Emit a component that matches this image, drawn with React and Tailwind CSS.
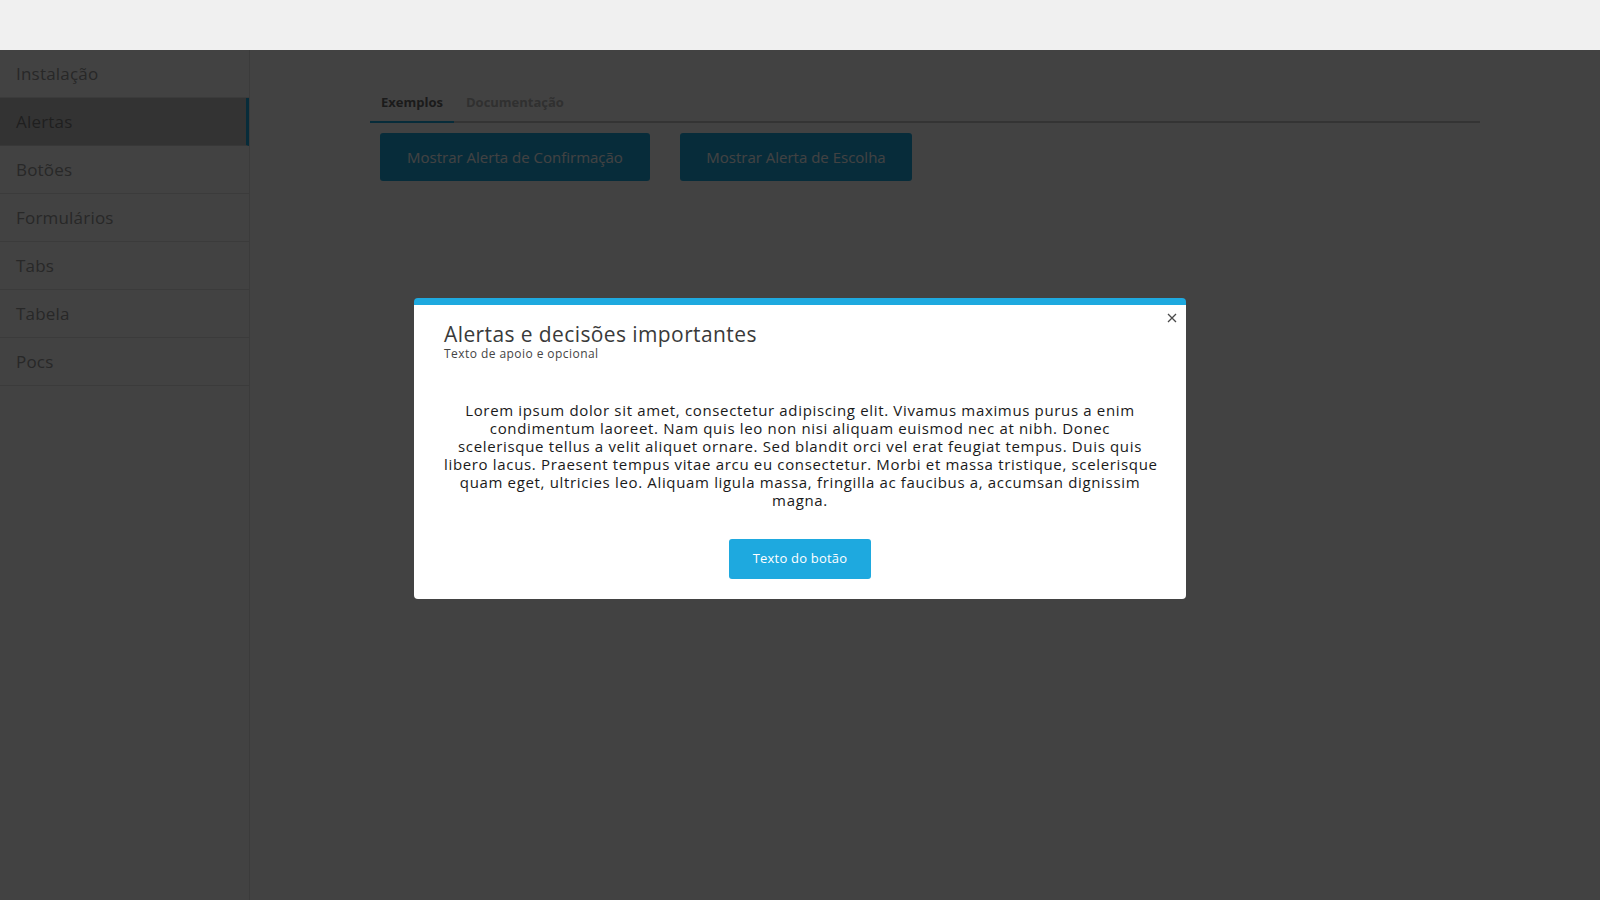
import React from "react";

const font = { fontFamily: '"Open Sans", "DejaVu Sans", sans-serif' };

const items = ["Instalação", "Alertas", "Botões", "Formulários", "Tabs", "Tabela", "Pocs"];

const lines = [
  "Lorem ipsum dolor sit amet, consectetur adipiscing elit. Vivamus maximus purus a enim",
  "condimentum laoreet. Nam quis leo non nisi aliquam euismod nec at nibh. Donec",
  "scelerisque tellus a velit aliquet ornare. Sed blandit orci vel erat feugiat tempus. Duis quis",
  "libero lacus. Praesent tempus vitae arcu eu consectetur. Morbi et massa tristique, scelerisque",
  "quam eget, ultricies leo. Aliquam ligula massa, fringilla ac faucibus a, accumsan dignissim",
  "magna.",
];

export default function App() {
  return (
    <div className="w-[1600px] h-[900px] overflow-hidden bg-white relative" style={font}>
      <header className="h-[50px] bg-[#f0f0f0] relative z-20" />
      <div className="flex h-[850px]">
        <aside className="w-[250px] shrink-0 border-r border-[#e2e2e2] bg-white">
          {items.map((it) => (
            <div
              key={it}
              className={
                it === "Alertas"
                  ? "h-[48px] flex items-center pl-4 text-[17px] tracking-[0.2px] text-[#7a7a7a] bg-[#c6c6c6] border-b border-[#d6d6d6] border-r-[3px] border-r-[#1ea9df]"
                  : "h-[48px] flex items-center pl-4 text-[17px] tracking-[0.2px] text-[#999999] border-b border-[#e2e2e2]"
              }
            >
              {it}
            </div>
          ))}
        </aside>
        <main className="flex-1 px-[120px]">
          <div className="mt-[31px] flex border-b-2 border-[#c8c8c8]">
            <div className="h-[42px] -mb-[2px] px-[11px] pt-[4px] flex items-center text-[13px] font-bold text-[#6a6a6a] border-b-2 border-[#1ea9df]">
              Exemplos
            </div>
            <div className="h-[42px] -mb-[2px] ml-[1px] px-[11px] pt-[4px] flex items-center text-[13px] font-bold text-[#b8b8b8] border-b-2 border-[#c8c8c8]">
              Documentação
            </div>
          </div>
          <div className="mt-[10px] ml-[10px] flex gap-[30px]">
            <button className="h-[48px] w-[270px] rounded-[3px] bg-[#1ea9df] text-[15px] text-white">
              Mostrar Alerta de Confirmação
            </button>
            <button className="h-[48px] w-[232px] rounded-[3px] bg-[#1ea9df] text-[15px] text-white">
              Mostrar Alerta de Escolha
            </button>
          </div>
        </main>
      </div>

      <div className="fixed left-0 right-0 bottom-0 top-[50px] bg-[rgba(0,0,0,0.74)] z-10" />

      <div className="fixed inset-0 z-30 flex items-center justify-center pointer-events-none">
        <div className="mb-[3px] w-[772px] bg-white rounded-[4px] border-t-[7px] border-[#1ea9df] relative pointer-events-auto">
          <button className="absolute right-[8px] top-[7px] w-[12px] h-[12px] flex items-center justify-center">
            <svg width="10" height="10" viewBox="0 0 10 10">
              <path d="M1 1L9 9M9 1L1 9" stroke="#4a4a4a" strokeWidth="1.3" />
            </svg>
          </button>
          <div className="px-[30px] pt-[17px] pb-[20px]">
            <div className="text-[21px] leading-[24px] tracking-[0.4px] text-[#3a3a3a]">Alertas e decisões importantes</div>
            <div className="text-[12px] leading-[16px] tracking-[0.44px] text-[#444]">Texto de apoio e opcional</div>
            <p className="mt-[39px] text-[15px] leading-[18px] tracking-[0.66px] text-[#1a1a1a] text-center">
              {lines.map((l) => (
                <span key={l} className="block whitespace-nowrap">{l}</span>
              ))}
            </p>
            <div className="mt-[30px] flex justify-center">
              <button className="w-[142px] h-[40px] rounded-[3px] bg-[#1ea9df] text-white text-[13px] font-medium tracking-[0.2px]">
                Texto do botão
              </button>
            </div>
          </div>
        </div>
      </div>
    </div>
  );
}
